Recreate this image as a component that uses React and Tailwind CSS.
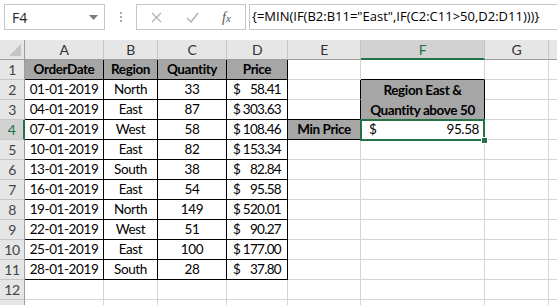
import React from 'react';

const rows = [
  ['01-01-2019', 'North', '33', '58.41'],
  ['04-01-2019', 'East', '87', '303.63'],
  ['07-01-2019', 'West', '58', '108.46'],
  ['10-01-2019', 'East', '82', '153.34'],
  ['13-01-2019', 'South', '38', '82.84'],
  ['16-01-2019', 'East', '54', '95.58'],
  ['19-01-2019', 'North', '149', '520.01'],
  ['22-01-2019', 'West', '51', '90.27'],
  ['25-01-2019', 'East', '100', '177.00'],
  ['28-01-2019', 'South', '28', '37.80'],
];

const grid = 'border-r border-b border-r-[#d4d4d4] border-b-[#d4d4d4]';
const tbl = 'border-r border-b border-r-black border-b-black';

function RowHead({ n, sel }) {
  return sel ? (
    <div className="flex items-center justify-center bg-[#d2d2d2] border-r-2 border-r-[#217346] border-b border-b-[#c6c6c6] text-[#217346] text-[14px]">
      {n}
    </div>
  ) : (
    <div className="flex items-center justify-center bg-[#e6e6e6] border-r border-r-[#9c9c9c] border-b border-b-[#c6c6c6] text-[#444] text-[14px]">
      {n}
    </div>
  );
}

function Blank({ cls = '' }) {
  return <div className={grid + ' ' + cls}></div>;
}

export default function App() {
  const cells = [];
  cells.push(
    <div key="corner" className="relative bg-[#e6e6e6] border-r border-r-[#9c9c9c] border-b border-b-[#9c9c9c]">
      <svg className="absolute right-[3px] bottom-[3px]" width="12" height="12" viewBox="0 0 12 12">
        <polygon points="12,0 12,12 0,12" fill="#c4c4c4" />
      </svg>
    </div>
  );
  ['A', 'B', 'C', 'D', 'E'].forEach((c) =>
    cells.push(
      <div key={'h' + c} className="flex items-center justify-center bg-[#e6e6e6] border-r border-r-[#c6c6c6] border-b border-b-[#9c9c9c] text-[#333] text-[14px]">
        {c}
      </div>
    )
  );
  cells.push(
    <div key="hF" className="flex items-center justify-center bg-[#d2d2d2] border-r border-r-[#c6c6c6] border-b-2 border-b-[#217346] text-[#217346] text-[14px]">
      F
    </div>
  );
  cells.push(
    <div key="hG" className="flex items-center justify-center bg-[#e6e6e6] border-r border-r-[#c6c6c6] border-b border-b-[#9c9c9c] text-[#333] text-[14px]">
      G
    </div>
  );
  cells.push(<div key="hH" className="bg-[#e6e6e6] border-b border-b-[#9c9c9c]"></div>);

  cells.push(<RowHead key="r1" n={1} />);
  ['OrderDate', 'Region', 'Quantity', 'Price'].forEach((t) =>
    cells.push(
      <div key={'t' + t} className={tbl + ' flex items-center justify-center bg-[#a6a6a6] font-bold'}>
        {t}
      </div>
    )
  );
  cells.push(<Blank key="e1" />);
  cells.push(<Blank key="f1" cls="!border-b-black" />);
  cells.push(<Blank key="g1" />);
  cells.push(<div key="hh1" className="border-b border-b-[#d4d4d4]"></div>);

  rows.forEach((r, i) => {
    const n = i + 2;
    cells.push(<RowHead key={'r' + n} n={n} sel={n === 4} />);
    cells.push(
      <div key={'a' + n} className={tbl + ' flex items-center justify-center'}>
        {r[0]}
      </div>
    );
    cells.push(
      <div key={'b' + n} className={tbl + ' flex items-center justify-center'}>
        {r[1]}
      </div>
    );
    cells.push(
      <div key={'c' + n} className={tbl + ' flex items-center justify-center'}>
        {r[2]}
      </div>
    );
    cells.push(
      <div key={'d' + n} className={tbl + ' flex items-center justify-between pl-[6px] pr-[6px]'}>
        <span>$</span>
        <span className="tracking-[-0.7px]">{r[3]}</span>
      </div>
    );
    if (n === 2) {
      cells.push(<Blank key="e2" cls="!border-r-black" />);
      cells.push(
        <div key="f2" className={tbl + ' row-span-2 flex flex-col items-center justify-center bg-[#a6a6a6] font-bold leading-[20px]'}>
          <span>Region East &amp;</span>
          <span>Quantity above 50</span>
        </div>
      );
    } else if (n === 3) {
      cells.push(<Blank key="e3" cls="!border-r-black !border-b-black" />);
    } else if (n === 4) {
      cells.push(
        <div key="e4" className={tbl + ' flex items-center justify-center bg-[#a6a6a6] font-bold'}>
          Min Price
        </div>
      );
      cells.push(
        <div key="f4" className={grid + ' relative flex items-center justify-between pl-[8px] pr-[5px]'}>
          <span>$</span>
          <span>95.58</span>
          <div className="absolute -left-[1px] -top-[1px] -right-[1px] -bottom-[2px] border-2 border-[#217346]"></div>
          <div className="absolute -right-[4px] -bottom-[5px] w-[7px] h-[7px] bg-[#217346] border border-white"></div>
        </div>
      );
    } else {
      cells.push(<Blank key={'e' + n} />);
      cells.push(<Blank key={'f' + n} />);
    }
    cells.push(<Blank key={'g' + n} />);
    cells.push(<div key={'hh' + n} className="border-b border-b-[#d4d4d4]"></div>);
  });

  [12, 13].forEach((n) => {
    cells.push(<RowHead key={'r' + n} n={n === 12 ? 12 : ''} />);
    ['a', 'b', 'c', 'd', 'e', 'f', 'g'].forEach((c) => cells.push(<Blank key={c + n} />));
    cells.push(<div key={'hh' + n} className="border-b border-b-[#d4d4d4]"></div>);
  });

  return (
    <div className="w-[557px] h-[305px] overflow-hidden bg-white text-black text-[13.5px] font-['Lato','Liberation_Sans',sans-serif]">
      <div className="h-[40px] flex items-start pt-[4px] pl-[4px] bg-white tracking-normal">
        <div className="w-[101px] h-[26px] border border-[#c6c6c6] flex items-center justify-between pl-[7px] pr-[6px] text-[14px] text-[#222] font-['Open_Sans',sans-serif]">
          <span>F4</span>
          <svg width="9" height="5" viewBox="0 0 9 5">
            <polygon points="0,0 9,0 4.5,5" fill="#7a7a7a" />
          </svg>
        </div>
        <div className="w-[31px] h-[26px] flex flex-col items-center justify-center gap-[2px]">
          <div className="w-[2px] h-[2px] bg-[#aaa]"></div>
          <div className="w-[2px] h-[2px] bg-[#aaa]"></div>
          <div className="w-[2px] h-[2px] bg-[#aaa]"></div>
        </div>
        <div className="w-[110px] h-[26px] border border-[#c6c6c6] flex items-center">
          <svg className="ml-[14px]" width="11" height="11" viewBox="0 0 11 11">
            <path d="M1 1 L10 10 M10 1 L1 10" stroke="#b4b4b4" strokeWidth="1.4" fill="none" />
          </svg>
          <svg className="ml-[24px]" width="13" height="11" viewBox="0 0 13 11">
            <path d="M1 6 L5 10 L12 1" stroke="#b4b4b4" strokeWidth="1.6" fill="none" />
          </svg>
          <span className="ml-[23px] italic text-[14px] text-[#555] font-['Liberation_Serif',serif]">
            f<span className="text-[11px]">x</span>
          </span>
        </div>
        <div className="ml-[3px] flex-1 h-[26px] border border-r-0 border-[#c6c6c6] flex items-center pl-[2px] text-[13px] text-black font-['Open_Sans',sans-serif] whitespace-nowrap overflow-hidden">
          {'{=MIN(IF(B2:B11="East",IF(C2:C11>50,D2:D11)))}'}
        </div>
      </div>
      <div className="grid grid-cols-[25px_79px_54px_69px_61px_73px_124px_64px_1fr] auto-rows-[20px] tracking-[-0.4px]">
        {cells}
      </div>
    </div>
  );
}
